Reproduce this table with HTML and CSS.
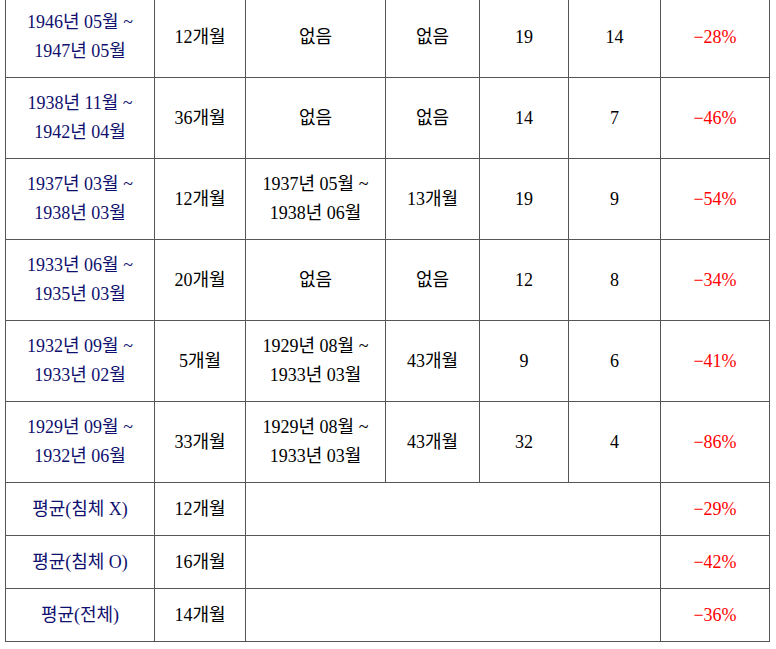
FILE: index.html
```html
<!DOCTYPE html>
<html lang="ko">
<head>
<meta charset="utf-8">
<link rel="stylesheet" href="styles.css">
</head>
<body>
<table class="tbl">
  <colgroup>
    <col class="c1"><col class="c2"><col class="c3"><col class="c4"><col class="c5"><col class="c6"><col class="c7">
  </colgroup>
  <tr class="tall">
    <td class="period">1946년 05월 ~<br>1947년 05월</td>
    <td>12개월</td><td>없음</td><td>없음</td><td>19</td><td>14</td><td class="neg">−28%</td>
  </tr>
  <tr class="tall">
    <td class="period">1938년 11월 ~<br>1942년 04월</td>
    <td>36개월</td><td>없음</td><td>없음</td><td>14</td><td>7</td><td class="neg">−46%</td>
  </tr>
  <tr class="tall">
    <td class="period">1937년 03월 ~<br>1938년 03월</td>
    <td>12개월</td><td>1937년 05월 ~<br>1938년 06월</td><td>13개월</td><td>19</td><td>9</td><td class="neg">−54%</td>
  </tr>
  <tr class="tall">
    <td class="period">1933년 06월 ~<br>1935년 03월</td>
    <td>20개월</td><td>없음</td><td>없음</td><td>12</td><td>8</td><td class="neg">−34%</td>
  </tr>
  <tr class="tall">
    <td class="period">1932년 09월 ~<br>1933년 02월</td>
    <td>5개월</td><td>1929년 08월 ~<br>1933년 03월</td><td>43개월</td><td>9</td><td>6</td><td class="neg">−41%</td>
  </tr>
  <tr class="tall">
    <td class="period">1929년 09월 ~<br>1932년 06월</td>
    <td>33개월</td><td>1929년 08월 ~<br>1933년 03월</td><td>43개월</td><td>32</td><td>4</td><td class="neg">−86%</td>
  </tr>
  <tr class="short">
    <td class="period">평균(침체 X)</td>
    <td>12개월</td><td colspan="4"></td><td class="neg">−29%</td>
  </tr>
  <tr class="short">
    <td class="period">평균(침체 O)</td>
    <td>16개월</td><td colspan="4"></td><td class="neg">−42%</td>
  </tr>
  <tr class="short">
    <td class="period">평균(전체)</td>
    <td>14개월</td><td colspan="4"></td><td class="neg">−36%</td>
  </tr>
</table>
</body>
</html>
```

FILE: styles.css
```css
html, body {
  margin: 0;
  padding: 0;
  background: #ffffff;
}

body {
  padding-left: 5px;
}

.tbl {
  margin-top: -4px;
  border-collapse: collapse;
  table-layout: fixed;
  width: 764px;
  font-family: "Liberation Serif", "Noto Sans CJK KR", serif;
  font-size: 18px;
  line-height: 29px;
  color: #000000;
}

.c1 { width: 149px; }
.c2 { width: 91px; }
.c3 { width: 140px; }
.c4 { width: 94px; }
.c5 { width: 89px; }
.c6 { width: 92px; }
.c7 { width: 109px; }

.tbl td {
  border: 1px solid #555555;
  padding: 0;
  text-align: center;
  vertical-align: middle;
}

.tall { height: 81px; }
.short { height: 53px; }

.period { color: #10106e; }
.neg { color: #ff0000; }
```
